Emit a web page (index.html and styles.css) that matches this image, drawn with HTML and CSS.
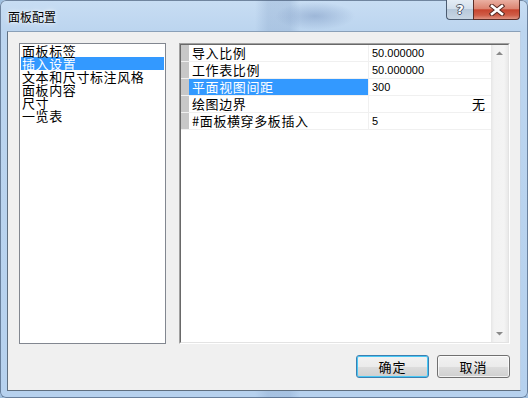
FILE: index.html
```html
<!DOCTYPE html>
<html>
<head>
<meta charset="utf-8">
<link rel="stylesheet" href="styles.css">
</head>
<body>
<div class="window">
  <div class="titlebar">
    <span class="title">面板配置</span>
    <div class="caption">
      <div class="cbtn help"><span>?</span></div>
      <div class="cbtn close">
        <svg width="16" height="12" viewBox="0 0 16 12">
          <path d="M3 2 L13 10 M13 2 L3 10" stroke="#5a2a22" stroke-width="4.6" stroke-linecap="square"/>
          <path d="M3 2 L13 10 M13 2 L3 10" stroke="#ffffff" stroke-width="2.6" stroke-linecap="square"/>
        </svg>
      </div>
    </div>
  </div>
  <div class="client">
    <div class="main">
      <ul class="listbox">
        <li class="item">面板标签</li>
        <li class="item selected">插入设置</li>
        <li class="item">文本和尺寸标注风格</li>
        <li class="item">面板内容</li>
        <li class="item">尺寸</li>
        <li class="item">一览表</li>
      </ul>
      <div class="grid">
        <div class="grid-inner">
          <div class="rows">
            <div class="row"><div class="margin"></div><div class="name">导入比例</div><div class="value">50.000000</div></div>
            <div class="row"><div class="margin"></div><div class="name">工作表比例</div><div class="value">50.000000</div></div>
            <div class="row"><div class="margin"></div><div class="name selected">平面视图间距</div><div class="value">300</div></div>
            <div class="row"><div class="margin"></div><div class="name">绘图边界</div><div class="value right">无</div></div>
            <div class="row"><div class="margin"></div><div class="name">#面板横穿多板插入</div><div class="value">5</div></div>
          </div>
          <div class="scrollbar">
            <svg class="arrow" width="17" height="17" viewBox="0 0 17 17"><path d="M5 10 L12 10 L8.5 6.5 Z" fill="#8a8a8a"/></svg>
            <svg class="arrow" width="17" height="17" viewBox="0 0 17 17"><path d="M5 7 L12 7 L8.5 10.5 Z" fill="#8a8a8a"/></svg>
          </div>
        </div>
      </div>
    </div>
    <div class="buttons">
      <button class="btn default">确定</button>
      <button class="btn">取消</button>
    </div>
  </div>
</div>
</body>
</html>
```
FILE: styles.css
```css
html, body {
  margin: 0;
  padding: 0;
}
body {
  width: 528px;
  height: 398px;
  background: #9fbfdf;
  overflow: hidden;
  font-family: "Noto Sans CJK SC", "Liberation Sans", sans-serif;
}
.window {
  width: 528px;
  height: 398px;
  box-sizing: border-box;
  display: flex;
  flex-direction: column;
  background:
    radial-gradient(ellipse 40px 14px at 315px 16px, rgba(90,120,170,0.35), rgba(90,120,170,0) 100%),
    linear-gradient(to right, rgba(255,255,255,0) 255px, rgba(120,150,190,0.25) 268px, rgba(120,150,190,0.25) 290px, rgba(255,255,255,0) 300px),
    linear-gradient(to bottom, #c8ddf3 0px, #bcd5ef 30px, #b6d1ee 100%);
  border-radius: 6px 6px 6px 6px;
  box-shadow: inset 0 0 0 1px rgba(40,60,90,0.55);
}
.titlebar {
  height: 31px;
  display: flex;
  align-items: flex-start;
  flex: none;
}
.title {
  font-size: 12px;
  line-height: 14px;
  margin: 10px 0 0 8px;
  color: #000;
  text-shadow: 0 0 6px rgba(255,255,255,0.9), 0 0 3px rgba(255,255,255,0.9);
}
.caption {
  margin-left: auto;
  margin-right: 8px;
  display: flex;
}
.cbtn {
  height: 20px;
  box-sizing: border-box;
  border: 1px solid #4b5b70;
  border-top: none;
  display: flex;
  align-items: center;
  justify-content: center;
}
.help {
  width: 27px;
  border-radius: 0 0 0 4px;
  border-right: none;
  background: linear-gradient(to bottom, #e4ecf5 0%, #d3dfec 45%, #b7c8da 50%, #c8d6e4 100%);
}
.help span {
  font-family: "DejaVu Sans", sans-serif;
  font-weight: bold;
  font-size: 13px;
  line-height: 14px;
  color: #fff;
  text-shadow: 1px 0 0 #4a5568, -1px 0 0 #4a5568, 0 1px 0 #4a5568, 0 -1px 0 #4a5568;
}
.close {
  width: 47px;
  border-radius: 0 0 4px 0;
  background: linear-gradient(to bottom, #eab0a2 0%, #dc8572 45%, #c8452f 52%, #cf5d47 80%, #e09482 100%);
  border-color: #5c2e28;
}
.client {
  flex: 1;
  margin: 0 7px 7px 7px;
  border: 1px solid #7a8ea6;
  border-color: #8aa0b8 #bdd0e6 #5f6f80 #5f6f80;
  background: #f0f0f0;
  display: flex;
  flex-direction: column;
  padding: 11px 10px 0 11px;
}
.main {
  display: flex;
  gap: 13px;
  height: 301px;
}
.listbox {
  margin: 0;
  list-style: none;
  width: 147px;
  height: 301px;
  box-sizing: border-box;
  border: 1px solid #828790;
  background: #fff;
  padding: 0 1px;
}
.item {
  height: 13px;
  line-height: 13px;
  font-size: 13px;
  letter-spacing: 0.6px;
  padding-left: 1px;
  white-space: nowrap;
  color: #000;
}
.item.selected {
  background: #3399ff;
  color: #fff;
}
.grid {
  width: 331px;
  height: 301px;
  box-sizing: border-box;
  border: 1px solid;
  border-color: #a0a0a0 #ffffff #ffffff #a0a0a0;
}
.grid-inner {
  height: 100%;
  box-sizing: border-box;
  border: 1px solid;
  border-color: #696969 #e3e3e3 #e3e3e3 #696969;
  background: #fff;
  display: flex;
}
.rows {
  width: 310px;
}
.row {
  display: flex;
  height: 16px;
  border-bottom: 1px solid #f0f0f0;
}
.margin {
  width: 8px;
  background: #c8c8c8;
  flex: none;
}
.name {
  width: 180px;
  flex: none;
  font-size: 13px;
  letter-spacing: 0.6px;
  line-height: 16px;
  padding-left: 3px;
  box-sizing: border-box;
  white-space: nowrap;
  border-right: 1px solid #f0f0f0;
}
.name.selected {
  background: #3399ff;
  color: #fff;
}
.value {
  flex: 1;
  font-family: "Liberation Sans", "Noto Sans CJK SC", sans-serif;
  font-size: 11px;
  line-height: 16px;
  padding-left: 3px;
  padding-right: 6px;
  white-space: nowrap;
}
.value.right {
  text-align: right;
  font-family: "Noto Sans CJK SC", sans-serif;
  font-size: 13px;
}
.scrollbar {
  width: 17px;
  flex: none;
  display: flex;
  flex-direction: column;
  justify-content: space-between;
  background: linear-gradient(to right, #e6e6e6 0px, #f2f2f2 3px, #f4f4f4 13px, #e9e9e9 17px);
}
.arrow {
  display: block;
}
.buttons {
  display: flex;
  justify-content: flex-end;
  gap: 8px;
  margin-top: 11px;
}
.btn {
  width: 73px;
  height: 23px;
  margin: 0;
  padding: 0;
  border: 1px solid #707070;
  border-radius: 3px;
  background: linear-gradient(to bottom, #f2f2f2 0%, #ebebeb 50%, #dddddd 51%, #cfcfcf 100%);
  box-shadow: inset 0 0 0 1px rgba(255,255,255,0.7);
  font-family: "Noto Sans CJK SC", sans-serif;
  font-size: 13px;
  letter-spacing: 1px;
  color: #000;
  line-height: 20px;
}
.btn.default {
  border-color: #3c7fb1;
  box-shadow: inset 0 0 0 1px #48c8f5;
  background: linear-gradient(to bottom, #eaf6fd 0%, #d9f0fc 50%, #bee6fd 51%, #a7d9f5 100%);
  background: linear-gradient(to bottom, #f2f2f2 0%, #ebebeb 50%, #dddddd 51%, #cfcfcf 100%);
}
```
